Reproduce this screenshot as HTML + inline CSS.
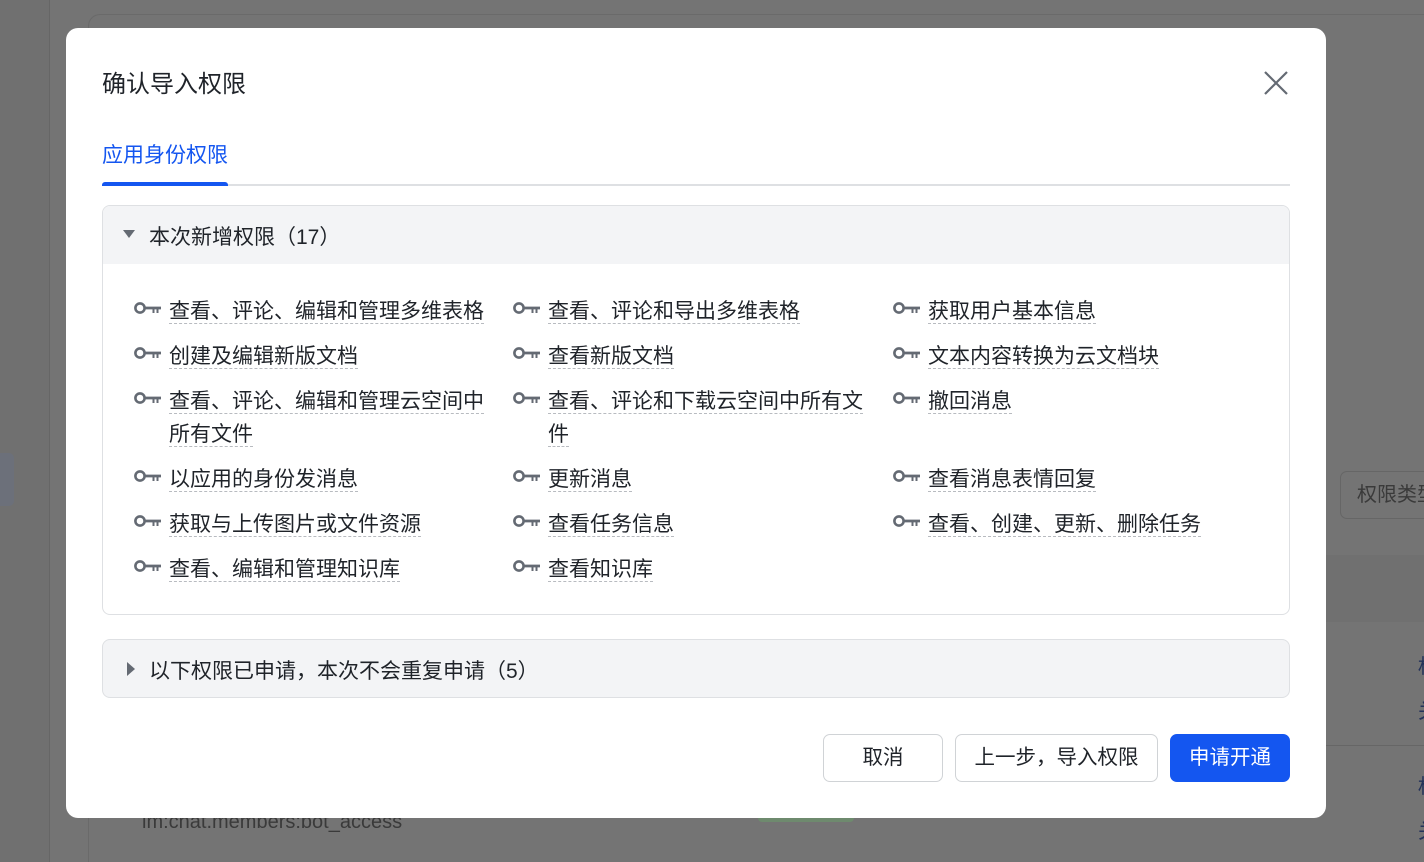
<!DOCTYPE html>
<html><head><meta charset="utf-8"><style>
*{margin:0;padding:0;box-sizing:border-box}
html,body{width:1424px;height:862px;overflow:hidden}
body{background:#747474;font-family:"Liberation Sans","Noto Sans CJK SC",sans-serif;position:relative;color:#1f2329}
.abs{position:absolute}
.modal{left:66px;top:28px;width:1260px;height:790px;background:#fff;border-radius:12px}
.key{position:absolute;width:28px;height:14px}
.it{position:absolute;font-size:21px;line-height:33px;color:#1f2329;white-space:nowrap}
.it span{border-bottom:1px dashed #b8bbc0}
.btn{position:absolute;top:706px;height:48px;border:1px solid #d0d3d6;border-radius:7px;background:#fff;font-size:20.5px;line-height:46px;text-align:center;color:#1f2329;white-space:nowrap}
.lay{position:absolute;left:0;top:0;width:1424px;height:862px}
</style></head><body>
<div class="abs" style="left:0;top:0;width:50px;height:862px;background:#707070;border-right:1px solid #666"></div>
<div class="abs" style="left:0;top:453px;width:14px;height:53px;background:#6c707a;border-radius:0 5px 5px 0"></div>
<div class="abs" style="left:88px;top:14px;width:1336px;height:848px;border:1px solid #6a6a6a;border-right:none;border-bottom:none;border-radius:12px 0 0 0;background:#747474"></div>
<div class="abs" style="left:1340px;top:471px;width:120px;height:48px;border:1px solid #666;border-radius:7px;font-size:20px;line-height:46px;padding-left:16px;color:#3a3a3a;white-space:nowrap">权限类型</div>
<div class="abs" style="left:1300px;top:471px;width:26px;height:48px;border:1px solid #666;border-left:none;border-radius:0 7px 7px 0"></div>
<div class="abs" style="left:1326px;top:555px;width:98px;height:67px;background:#707070"></div>
<div class="abs" style="left:1326px;top:745px;width:98px;height:1px;background:#666"></div>
<div class="abs" style="left:1418px;top:650px;font-size:20px;color:#23325a">权</div>
<div class="abs" style="left:1418px;top:695px;font-size:20px;color:#23325a">关</div>
<div class="abs" style="left:1418px;top:770px;font-size:20px;color:#23325a">权</div>
<div class="abs" style="left:1418px;top:815px;font-size:20px;color:#23325a">关</div>
<div class="abs" style="left:142px;top:811px;font-size:20px;color:#3a3a3a;white-space:nowrap">im:chat.members:bot_access</div>
<div class="abs" style="left:758px;top:812px;width:96px;height:10px;background:#6e8a6e;border-radius:4px"></div>

<div class="abs modal">
<div class="abs" style="left:36px;top:36px;font-size:24px;color:#1f2329;white-space:nowrap">确认导入权限</div>
<svg class="abs" style="left:1198px;top:43px" width="24" height="24" viewBox="0 0 24 24"><path d="M1 1L23 23M23 1L1 23" stroke="#646a73" stroke-width="2.2"/></svg>
<div class="abs" style="left:36px;top:111px;font-size:21px;color:#1456f0;white-space:nowrap">应用身份权限</div>
<div class="abs" style="left:36px;top:156px;width:1188px;height:2px;background:#dee0e3"></div>
<div class="abs" style="left:36px;top:154px;width:126px;height:4px;background:#1456f0;border-radius:3px 3px 0 0"></div>

<div class="abs" style="left:36px;top:177px;width:1188px;height:410px;border:1px solid #dee0e3;border-radius:8px;overflow:hidden">
<div style="height:58px;background:#f3f4f6;position:relative">
<svg class="abs" style="left:20px;top:24px" width="12" height="9"><path d="M0 0H12L6 8Z" fill="#646a73"/></svg>
<div class="abs" style="left:46px;top:15px;font-size:21px;white-space:nowrap">本次新增权限（17）</div>
</div>
</div>

<div class="abs" style="left:36px;top:611px;width:1188px;height:59px;border:1px solid #dee0e3;border-radius:8px;background:#f3f4f6">
<svg class="abs" style="left:24px;top:22px" width="9" height="14"><path d="M0 0V14L8 7Z" fill="#646a73"/></svg>
<div class="abs" style="left:46px;top:15px;font-size:21px;white-space:nowrap">以下权限已申请，本次不会重复申请（5）</div>
</div>

<div class="btn" style="left:757px;width:120px">取消</div>
<div class="btn" style="left:889px;width:203px">上一步，导入权限</div>
<div class="btn" style="left:1104px;width:120px;background:#1456f0;border-color:#1456f0;color:#fff">申请开通</div>
</div>

<svg width="0" height="0" style="position:absolute"><defs><g id="k"><circle cx="6" cy="7" r="4.6" fill="none" stroke="#646a73" stroke-width="2.6"/><path d="M10.5 5.6H27V8.4H24.5V12H22.5V8.4H20.5V12H18.5V8.4H10.5Z" fill="#646a73"/></g></defs></svg>

<div class="lay">
<svg class="key" style="left:134px;top:301px"><use href="#k"/></svg><div class="it" style="left:169px;top:295px"><span>查看、评论、编辑和管理多维表格</span></div>
<svg class="key" style="left:134px;top:346px"><use href="#k"/></svg><div class="it" style="left:169px;top:340px"><span>创建及编辑新版文档</span></div>
<svg class="key" style="left:134px;top:391px"><use href="#k"/></svg><div class="it" style="left:169px;top:385px"><span>查看、评论、编辑和管理云空间中</span><br><span>所有文件</span></div>
<svg class="key" style="left:134px;top:469px"><use href="#k"/></svg><div class="it" style="left:169px;top:463px"><span>以应用的身份发消息</span></div>
<svg class="key" style="left:134px;top:514px"><use href="#k"/></svg><div class="it" style="left:169px;top:508px"><span>获取与上传图片或文件资源</span></div>
<svg class="key" style="left:134px;top:559px"><use href="#k"/></svg><div class="it" style="left:169px;top:553px"><span>查看、编辑和管理知识库</span></div>

<svg class="key" style="left:513px;top:301px"><use href="#k"/></svg><div class="it" style="left:548px;top:295px"><span>查看、评论和导出多维表格</span></div>
<svg class="key" style="left:513px;top:346px"><use href="#k"/></svg><div class="it" style="left:548px;top:340px"><span>查看新版文档</span></div>
<svg class="key" style="left:513px;top:391px"><use href="#k"/></svg><div class="it" style="left:548px;top:385px"><span>查看、评论和下载云空间中所有文</span><br><span>件</span></div>
<svg class="key" style="left:513px;top:469px"><use href="#k"/></svg><div class="it" style="left:548px;top:463px"><span>更新消息</span></div>
<svg class="key" style="left:513px;top:514px"><use href="#k"/></svg><div class="it" style="left:548px;top:508px"><span>查看任务信息</span></div>
<svg class="key" style="left:513px;top:559px"><use href="#k"/></svg><div class="it" style="left:548px;top:553px"><span>查看知识库</span></div>

<svg class="key" style="left:893px;top:301px"><use href="#k"/></svg><div class="it" style="left:928px;top:295px"><span>获取用户基本信息</span></div>
<svg class="key" style="left:893px;top:346px"><use href="#k"/></svg><div class="it" style="left:928px;top:340px"><span>文本内容转换为云文档块</span></div>
<svg class="key" style="left:893px;top:391px"><use href="#k"/></svg><div class="it" style="left:928px;top:385px"><span>撤回消息</span></div>
<svg class="key" style="left:893px;top:469px"><use href="#k"/></svg><div class="it" style="left:928px;top:463px"><span>查看消息表情回复</span></div>
<svg class="key" style="left:893px;top:514px"><use href="#k"/></svg><div class="it" style="left:928px;top:508px"><span>查看、创建、更新、删除任务</span></div>
</div>
</body></html>
